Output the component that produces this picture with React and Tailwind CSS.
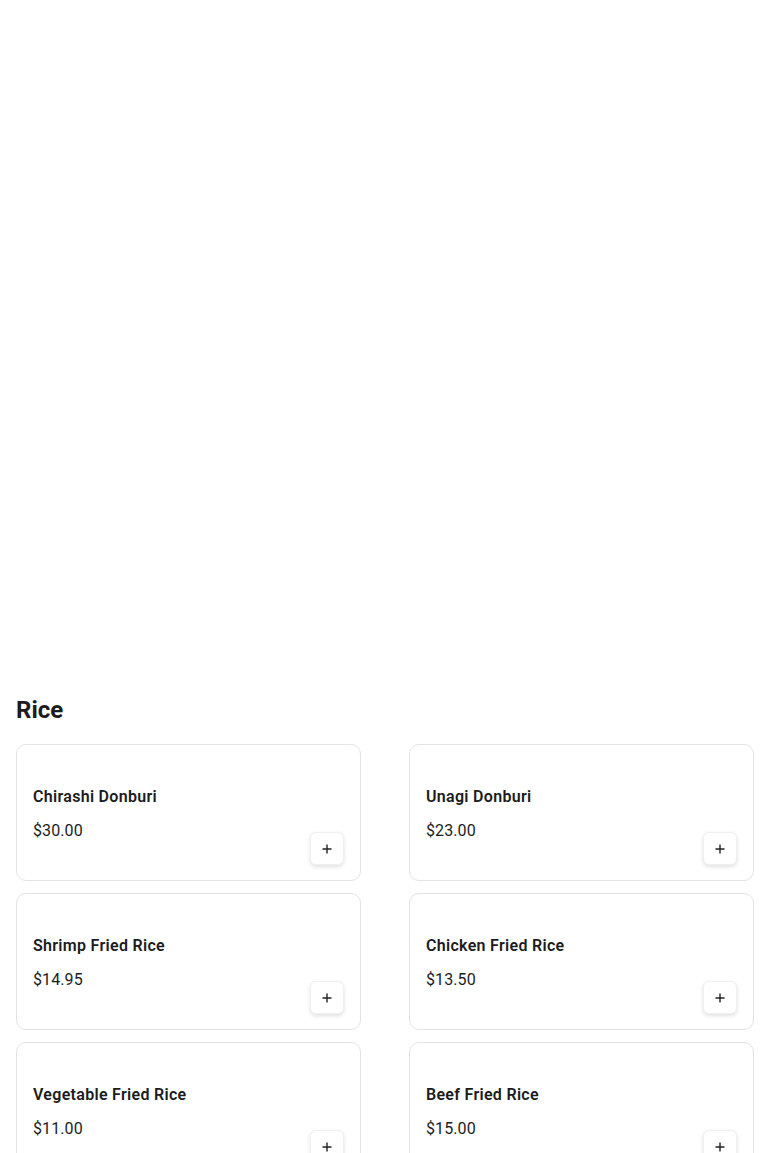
import React from 'react';

const items = [
    { name: 'Chirashi Donburi', price: 30.0 },
    { name: 'Unagi Donburi', price: 23.0 },
    { name: 'Shrimp Fried Rice', price: 14.95 },
    { name: 'Chicken Fried Rice', price: 13.5 },
    { name: 'Vegetable Fried Rice', price: 11.0 },
    { name: 'Beef Fried Rice', price: 15.0 },
];

const PlusIcon = () => (
    <svg width="12" height="12" viewBox="0 0 12 12" fill="none" stroke="#222" strokeWidth="1.4">
        <path d="M6 1.5v9M1.5 6h9" />
    </svg>
);

const MenuCard = ({ item }) => (
    <div className="flex justify-between min-h-[137px] px-4 pt-[17px] pb-[15px] bg-white border border-[#e3e3e3] rounded-[10px]">
        <div className="flex flex-col justify-center gap-[10px]">
            <h3 className="text-base font-semibold leading-6 text-[#1c1c1c] tracking-[0.3px]">{item.name}</h3>
            <p className="text-base leading-6 text-[#1c1c1c] tracking-[0.1px]">${item.price.toFixed(2)}</p>
        </div>
        <button className="self-end flex items-center justify-center w-[34px] h-[33px] bg-white rounded-[6px] border border-[#f0f0f0] shadow-[0_2px_4px_rgba(0,0,0,0.12)]">
            <PlusIcon />
        </button>
    </div>
);

export default function App() {
    return (
        <div className="min-h-screen bg-white font-['Roboto',sans-serif]">
            {/* Hero area (image not loaded) */}
            <div className="h-[680px]" />

            <section className="px-4">
                <h2 className="text-2xl font-bold leading-8 text-[#1c1c1c] mb-[18px] mt-[14px]">Rice</h2>
                <div className="grid grid-cols-2 gap-x-12 gap-y-3">
                    {items.map((item) => (
                        <MenuCard key={item.name} item={item} />
                    ))}
                </div>
            </section>
        </div>
    );
}
